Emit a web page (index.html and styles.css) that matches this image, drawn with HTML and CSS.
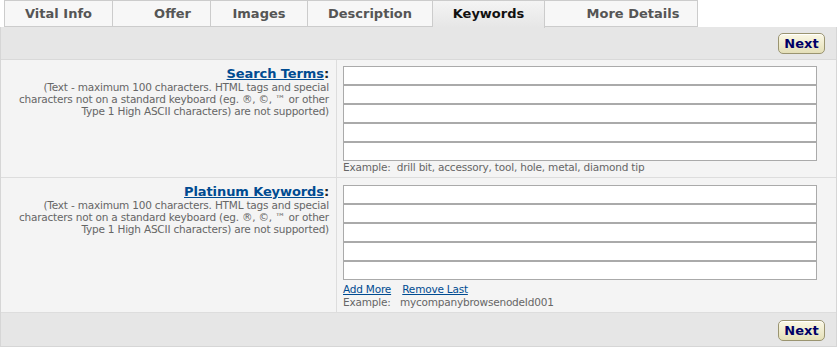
FILE: index.html
```html
<!DOCTYPE html>
<html lang="en">
<head>
    <meta charset="UTF-8" />
    <title>Keywords</title>
    <link rel="stylesheet" href="styles.css">
</head>
<body>
    <div class="tabs">
        <a class="tab tab-vital" href="#">Vital Info</a>
        <a class="tab tab-offer" href="#">Offer</a>
        <a class="tab tab-images" href="#">Images</a>
        <a class="tab tab-desc" href="#">Description</a>
        <a class="tab tab-keywords activo" href="#">Keywords</a>
        <a class="tab tab-more" href="#">More Details</a>
    </div>

    <div class="panel">
        <div class="barra">
            <button type="button" class="btn-next">Next</button>
        </div>

        <!-- Search Terms -->
        <div class="fila">
            <div class="etiqueta">
                <div class="titulo"><a href="#">Search Terms</a>:</div>
                <p class="nota">(Text - maximum 100 characters. HTML tags and special characters not on a standard keyboard (eg. &reg;, &copy;, &trade; or other Type 1 High ASCII characters) are not supported)</p>
            </div>
            <div class="campos">
                <input type="text" />
                <input type="text" />
                <input type="text" />
                <input type="text" />
                <input type="text" />
                <p class="ejemplo">Example:&nbsp; drill bit, accessory, tool, hole, metal, diamond tip</p>
            </div>
        </div>

        <!-- Platinum Keywords -->
        <div class="fila fila-platino">
            <div class="etiqueta">
                <div class="titulo"><a href="#">Platinum Keywords</a>:</div>
                <p class="nota">(Text - maximum 100 characters. HTML tags and special characters not on a standard keyboard (eg. &reg;, &copy;, &trade; or other Type 1 High ASCII characters) are not supported)</p>
            </div>
            <div class="campos">
                <input type="text" />
                <input type="text" />
                <input type="text" />
                <input type="text" />
                <input type="text" />
                <div class="acciones">
                    <a href="#">Add More</a>
                    <a href="#">Remove Last</a>
                </div>
                <p class="ejemplo">Example:&nbsp;&nbsp; mycompanybrowsenodeId001</p>
            </div>
        </div>

        <div class="barra barra-final">
            <button type="button" class="btn-next">Next</button>
        </div>
    </div>
</body>
</html>
```

FILE: styles.css
```css
* {
    margin: 0;
    padding: 0;
    box-sizing: border-box;
}

body {
    font-family: "DejaVu Sans", Verdana, sans-serif;
    background: #ffffff;
    color: #666666;
    width: 837px;
}

/* pestañas */
.tabs {
    display: flex;
    padding-left: 4px;
    height: 27px;
    position: relative;
    z-index: 1;
}

.tab {
    display: block;
    height: 27px;
    line-height: 26px;
    border: 1px solid #cccccc;
    border-left: none;
    background: #f7f7f7;
    color: #555555;
    font-size: 13px;
    font-weight: bold;
    text-align: center;
    text-decoration: none;
}

.tab-vital { width: 109px; border-left: 1px solid #cccccc; }
.tab-offer { width: 98px; padding-left: 22px; }
.tab-images { width: 97px; }
.tab-desc { width: 125px; }
.tab-keywords { width: 112px; }
.tab-more { width: 153px; padding-left: 24px; }

.tab.activo {
    background: linear-gradient(#f4f4f4, #e6e6e6);
    color: #111111;
    border-bottom: none;
    height: 28px;
}

.panel {
    border: 1px solid #d6d6d6;
    border-top: none;
}

.barra {
    background: #e6e6e6;
    height: 33px;
    border-bottom: 1px solid #d9d9d9;
    display: flex;
    justify-content: flex-end;
    align-items: center;
    padding-right: 11px;
}

.barra-final {
    height: 33px;
    border-bottom: none;
    padding-top: 1px;
}

.btn-next {
    width: 47px;
    height: 21px;
    border: 1px solid #9a9470;
    border-radius: 5px;
    background: linear-gradient(#fbf8e6, #e4dfb8);
    box-shadow: inset 0 1px 0 #ffffff;
    color: #000066;
    font-family: "DejaVu Sans", Verdana, sans-serif;
    font-size: 13px;
    font-weight: bold;
    cursor: pointer;
}

.fila {
    display: flex;
    background: #f4f4f4;
    border-bottom: 1px solid #dddddd;
}

.etiqueta {
    width: 336px;
    padding: 6px 7px 6px 6px;
    border-right: 1px solid #dddddd;
    text-align: right;
}

.titulo {
    font-size: 13px;
    font-weight: bold;
    color: #222222;
    line-height: 15px;
    letter-spacing: -0.1px;
}

.titulo a {
    color: #004b91;
}

.nota {
    font-size: 10.5px;
    letter-spacing: -0.2px;
    line-height: 12px;
    color: #666666;
}

.campos {
    flex: 1;
    padding: 6px 0 3px 6px;
}

.fila-platino .campos {
    padding-top: 7px;
}

.campos input {
    display: block;
    width: 474px;
    height: 19px;
    border: 1px solid #aaaaaa;
    background: #ffffff;
}

.ejemplo {
    font-size: 10.5px;
    letter-spacing: -0.2px;
    line-height: 13px;
    color: #666666;
}

.acciones {
    font-size: 10.5px;
    letter-spacing: -0.2px;
    line-height: 14px;
    margin-top: 2px;
}

.acciones a {
    color: #004b91;
    margin-right: 8px;
}
```
